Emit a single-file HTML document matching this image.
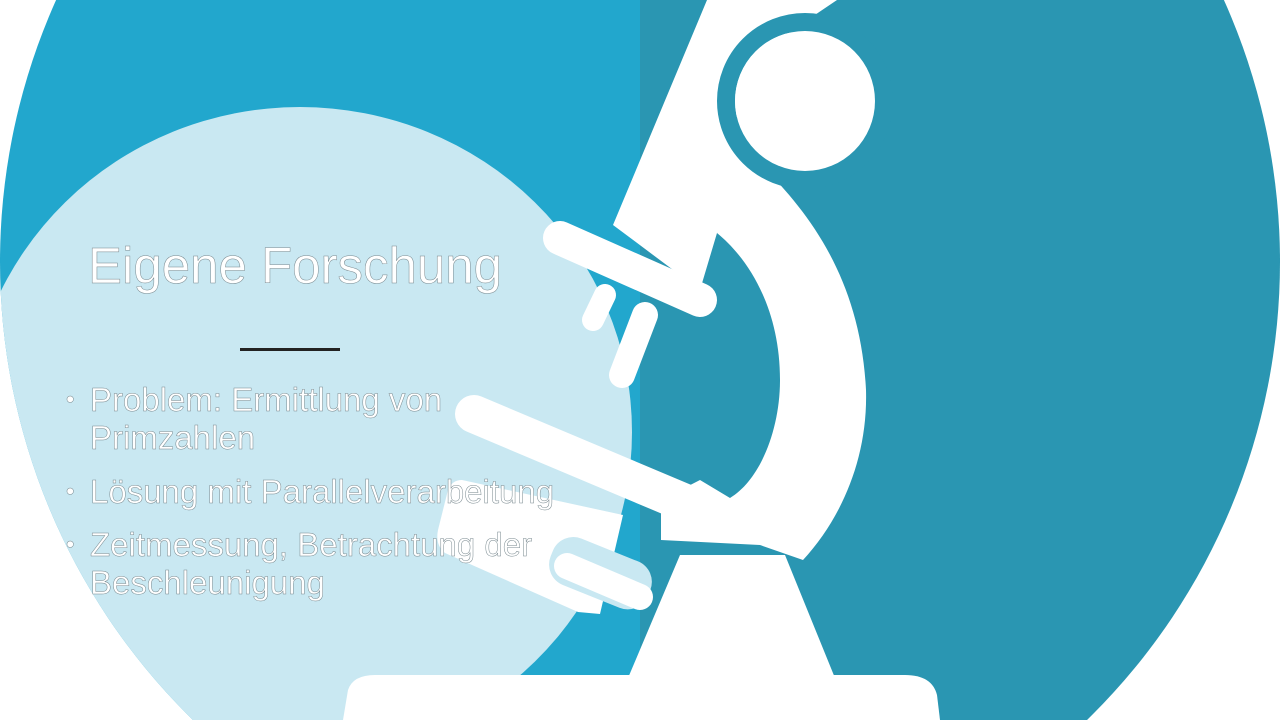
<!DOCTYPE html>
<html><head><meta charset="utf-8"><style>
html,body{margin:0;padding:0;background:#fff;width:1280px;height:720px;overflow:hidden;}
#s{position:relative;width:1280px;height:720px;overflow:hidden;background:#fff;}
svg{position:absolute;left:0;top:0;}
.t{position:absolute;color:#fff;font-family:"Liberation Sans",sans-serif;-webkit-text-stroke:0.5px #7a8a90;white-space:nowrap;}
.b{position:absolute;left:90px;font-size:33px;line-height:38px;}
.b:before{content:"•";position:absolute;left:-24px;font-size:24px;}
</style></head><body><div id="s">
<svg width="1280" height="720" viewBox="0 0 1280 720">
<defs>
<clipPath id="big"><circle cx="640" cy="262" r="640"/></clipPath>
</defs>
<g clip-path="url(#big)">
<rect x="0" y="0" width="640" height="720" fill="#22a7cd"/>
<rect x="640" y="0" width="640" height="720" fill="#2a96b2"/>
<ellipse cx="300" cy="432" rx="332" ry="325" fill="#c9e8f2"/>
</g>
<g fill="#fff">
<polygon points="707,0 837,0 800,25 745,70 735,130 760,175 717,233 700,290 613,225"/>
<path d="M745,150 C800,200 860,270 866,390 C868,460 840,520 803,560 L760,545 L661,540 L661,500 L700,480 L730,498 C760,480 780,430 780,380 C780,310 750,260 717,233 Z"/>
<line x1="560" y1="238" x2="700" y2="300" stroke="#fff" stroke-width="34" stroke-linecap="round"/>
<line x1="605" y1="295" x2="593" y2="320" stroke="#fff" stroke-width="22" stroke-linecap="round"/>
<line x1="645" y1="315" x2="622" y2="375" stroke="#fff" stroke-width="26" stroke-linecap="round"/>
<line x1="474" y1="414" x2="690" y2="505" stroke="#fff" stroke-width="38" stroke-linecap="round"/>
<path d="M462,480 L623,515 L600,614 L578,612 L445,553 Q435,545 438,530 L448,490 Q452,480 462,480 Z"/>
<rect x="548" y="548" width="105" height="50" rx="22" fill="#c9e8f2" transform="rotate(22 600 573)"/>
<line x1="567" y1="566" x2="640" y2="597" stroke="#fff" stroke-width="26" stroke-linecap="round"/>
<polygon points="680,555 785,555 835,678 628,678"/>
<path d="M343,720 L348,690 Q353,675 375,675 L905,675 Q932,675 937,695 L940,720 Z"/>
</g>
<circle cx="805" cy="101" r="79" fill="none" stroke="#2a96b2" stroke-width="18"/>
<circle cx="805" cy="101" r="70" fill="#fff"/>
<rect x="240" y="348" width="100" height="3" fill="#222"/>
</svg>
<div class="t" style="left:88px;top:236px;font-size:51px;line-height:60px;">Eigene Forschung</div>
<div class="t b" style="top:381px;">Problem: Ermittlung von<br>Primzahlen</div>
<div class="t b" style="top:473px;">Lösung mit Parallelverarbeitung</div>
<div class="t b" style="top:526px;">Zeitmessung, Betrachtung der<br>Beschleunigung</div>
</div></body></html>
